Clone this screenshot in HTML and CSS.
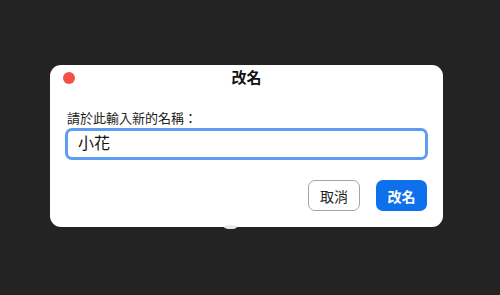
FILE: index.html
```html
<!DOCTYPE html>
<html lang="zh-Hant">
<head>
<meta charset="utf-8">
<link rel="stylesheet" href="styles.css">
</head>
<body>
<div class="dialog">
  <div class="header">
    <span class="dot"></span>
    <span class="title">改名</span>
    <span></span>
  </div>
  <label class="label" for="name">請於此輸入新的名稱：</label>
  <div class="input" id="name">小花</div>
  <div class="actions">
    <button class="btn cancel">取消</button>
    <button class="btn primary">改名</button>
  </div>
</div>
</body>
</html>
```
FILE: styles.css
```css
html, body {
  margin: 0;
  padding: 0;
  background: #232323;
  width: 500px;
  height: 295px;
  overflow: hidden;
  font-family: "Liberation Sans", "Noto Sans CJK TC", sans-serif;
}
.dialog {
  position: relative;
  margin: 65px 0 0 50px;
  width: 393px;
  height: 162px;
  box-sizing: border-box;
  background: #fff;
  border-radius: 11px;
  padding: 6px 15px 0 15px;
  display: flex;
  flex-direction: column;
}
.dialog::after {
  content: "";
  position: absolute;
  left: 174px;
  bottom: -2px;
  width: 13px;
  height: 4px;
  border-radius: 50%;
  background: #e8e8e8;
}
.header {
  display: grid;
  grid-template-columns: 1fr auto 1fr;
  align-items: center;
  height: 14px;
}
.dot {
  width: 12px;
  height: 12px;
  border-radius: 50%;
  background: #f4504a;
  margin-left: -2px;
}
.title {
  font-size: 15px;
  font-weight: bold;
  line-height: 14px;
  color: #111;
}
.label {
  margin-top: 26px;
  font-size: 13px;
  line-height: 16px;
  color: #222;
  padding-left: 2px;
}
.input {
  margin-top: 1px;
  height: 32px;
  box-sizing: border-box;
  border: 3px solid #5e9cf0;
  border-radius: 7px;
  padding: 0 10px;
  font-size: 16px;
  line-height: 26px;
  color: #111;
}
.actions {
  margin-top: 20px;
  display: flex;
  justify-content: flex-end;
  gap: 16px;
  padding-right: 1px;
}
.btn {
  height: 31px;
  width: 52px;
  border-radius: 7px;
  font-family: "Liberation Sans", "Noto Sans CJK TC", sans-serif;
  font-size: 14px;
  padding: 0;
}
.cancel {
  background: #fff;
  border: 1px solid #a5a5a5;
  color: #222;
}
.primary {
  width: 51px;
  background: #0e71eb;
  border: none;
  color: #fff;
  font-weight: bold;
}
```
